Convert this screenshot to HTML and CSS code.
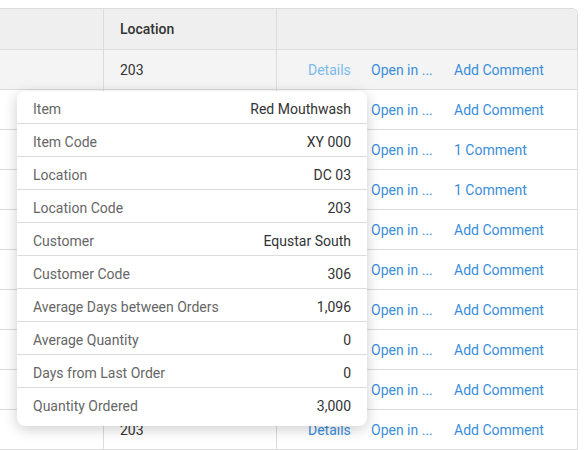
FILE: index.html
```html
<!DOCTYPE html>
<html lang="en">

<head>
  <meta charset="UTF-8">
  <title>Orders</title>
  <link rel="stylesheet" href="styles.css">
</head>

<body>
  <div class="page">
    <div class="grid">
      <div class="row head">
        <div class="cell c-first"></div>
        <div class="cell c-loc">Location</div>
        <div class="cell c-act"></div>
      </div>
      <div class="row hover">
        <div class="cell c-first"></div>
        <div class="cell c-loc">203</div>
        <div class="cell c-act"><a class="link light">Details</a><a class="link">Open in ...</a><a class="link">Add Comment</a></div>
      </div>
      <div class="row">
        <div class="cell c-first"></div>
        <div class="cell c-loc">203</div>
        <div class="cell c-act"><a class="link">Details</a><a class="link">Open in ...</a><a class="link">Add Comment</a></div>
      </div>
      <div class="row">
        <div class="cell c-first"></div>
        <div class="cell c-loc">203</div>
        <div class="cell c-act"><a class="link">Details</a><a class="link">Open in ...</a><a class="link">1 Comment</a></div>
      </div>
      <div class="row">
        <div class="cell c-first"></div>
        <div class="cell c-loc">203</div>
        <div class="cell c-act"><a class="link">Details</a><a class="link">Open in ...</a><a class="link">1 Comment</a></div>
      </div>
      <div class="row">
        <div class="cell c-first"></div>
        <div class="cell c-loc">203</div>
        <div class="cell c-act"><a class="link">Details</a><a class="link">Open in ...</a><a class="link">Add Comment</a></div>
      </div>
      <div class="row">
        <div class="cell c-first"></div>
        <div class="cell c-loc">203</div>
        <div class="cell c-act"><a class="link">Details</a><a class="link">Open in ...</a><a class="link">Add Comment</a></div>
      </div>
      <div class="row">
        <div class="cell c-first"></div>
        <div class="cell c-loc">203</div>
        <div class="cell c-act"><a class="link">Details</a><a class="link">Open in ...</a><a class="link">Add Comment</a></div>
      </div>
      <div class="row">
        <div class="cell c-first"></div>
        <div class="cell c-loc">203</div>
        <div class="cell c-act"><a class="link">Details</a><a class="link">Open in ...</a><a class="link">Add Comment</a></div>
      </div>
      <div class="row">
        <div class="cell c-first"></div>
        <div class="cell c-loc">203</div>
        <div class="cell c-act"><a class="link">Details</a><a class="link">Open in ...</a><a class="link">Add Comment</a></div>
      </div>
      <div class="row">
        <div class="cell c-first"></div>
        <div class="cell c-loc">203</div>
        <div class="cell c-act"><a class="link">Details</a><a class="link">Open in ...</a><a class="link">Add Comment</a></div>
      </div>

      <!-- details popup -->
      <div class="popup">
        <div class="pop-row"><span class="pop-label">Item</span><span class="pop-value">Red Mouthwash</span></div>
        <div class="pop-row"><span class="pop-label">Item Code</span><span class="pop-value">XY 000</span></div>
        <div class="pop-row"><span class="pop-label">Location</span><span class="pop-value">DC 03</span></div>
        <div class="pop-row"><span class="pop-label">Location Code</span><span class="pop-value">203</span></div>
        <div class="pop-row"><span class="pop-label">Customer</span><span class="pop-value">Equstar South</span></div>
        <div class="pop-row"><span class="pop-label">Customer Code</span><span class="pop-value">306</span></div>
        <div class="pop-row"><span class="pop-label">Average Days between Orders</span><span class="pop-value">1,096</span></div>
        <div class="pop-row"><span class="pop-label">Average Quantity</span><span class="pop-value">0</span></div>
        <div class="pop-row"><span class="pop-label">Days from Last Order</span><span class="pop-value">0</span></div>
        <div class="pop-row"><span class="pop-label">Quantity Ordered</span><span class="pop-value">3,000</span></div>
      </div>
    </div>
  </div>
</body>

</html>
```

FILE: styles.css
```css
* {
  margin: 0;
  padding: 0;
  box-sizing: border-box;
}

body {
  font-family: Roboto, 'Liberation Sans', sans-serif;
  font-size: 14px;
  color: #333;
  background: #fff;
  overflow: hidden;
}

.page {
  padding: 8px 6px 0 0;
}

.grid {
  position: relative;
  border: 1px solid #dcdcdc;
  border-left: none;
  border-top-right-radius: 6px;
}

.row {
  display: flex;
  height: 40px;
  border-top: 1px solid #dcdcdc;
}

.row.head {
  border-top: none;
  background: #efefef;
  font-weight: 500;
  border-top-right-radius: 6px;
}

.row.hover {
  background: #f4f4f4;
}

.cell {
  display: flex;
  align-items: center;
}

.c-first {
  width: 104px;
  border-right: 1px solid #dcdcdc;
}

.c-loc {
  width: 173px;
  padding-left: 16px;
  border-right: 1px solid #dcdcdc;
}

.c-act {
  flex: 1;
  display: grid;
  grid-template-columns: 63px 83px auto;
  padding-left: 31px;
}

.link {
  color: #3a8edb;
  cursor: pointer;
}

.link.light {
  color: #7dbbec;
}

/* details popup */
.popup {
  position: absolute;
  left: 17px;
  top: 82px;
  width: 350px;
  padding-bottom: 5px;
  background: #fff;
  border-radius: 8px;
  box-shadow: 0 3px 14px rgba(0, 0, 0, 0.2);
}

.pop-row {
  display: flex;
  justify-content: space-between;
  align-items: center;
  height: 33px;
  padding: 3px 16px 0;
  border-bottom: 1px solid #dcdcdc;
}

.pop-row:last-child {
  border-bottom: none;
  height: 33px;
}

.pop-label {
  color: #666;
}

.pop-value {
  color: #333;
}
```
